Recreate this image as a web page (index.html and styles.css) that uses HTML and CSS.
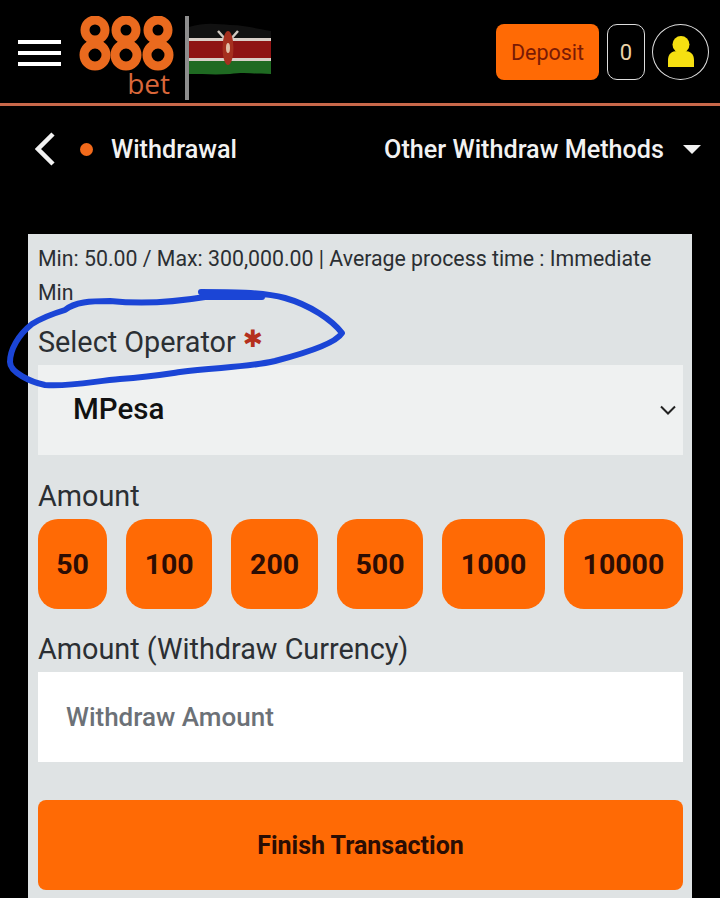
FILE: index.html
```html
<!DOCTYPE html>
<html lang="en">
<head>
  <meta charset="UTF-8" />
  <title>888bet Withdrawal</title>
  <link rel="stylesheet" href="styles.css">
</head>
<body>
  <header class="top-bar">
    <div class="menu-icon"><span></span><span></span><span></span></div>
    <div class="logo">
      <svg class="logo-rings" width="96" height="56" viewBox="0 0 96 56" fill="none" stroke="#ea6a1e" stroke-width="9">
        <circle cx="16" cy="14" r="10"/><circle cx="47" cy="14" r="10"/><circle cx="79" cy="14" r="10"/>
        <circle cx="16" cy="39" r="11"/><circle cx="47" cy="39" r="11"/><circle cx="79" cy="39" r="11"/>
      </svg>
      <span class="logo-bet">bet</span>
    </div>
    <svg class="flag" width="90" height="84" viewBox="0 0 90 84">
      <rect x="0" y="0" width="4" height="84" fill="#8d8d8d"/>
      <path d="M4 11 C20 6 32 8 45 9 C60 9 72 13 86 15 V23 H4Z" fill="#111"/>
      <rect x="4" y="22" width="82" height="3" fill="#d8cfc8"/>
      <rect x="4" y="25" width="82" height="17" fill="#8f1414"/>
      <rect x="4" y="42" width="82" height="3" fill="#d8cfc8"/>
      <path d="M4 45 H86 V58 C70 58 60 56 45 58 C30 59 18 58 4 58Z" fill="#1f6a22"/>
      <path d="M33 15 L41 24 M53 15 L45 24" stroke="#cfc8c0" stroke-width="2.5"/>
      <ellipse cx="43" cy="32" rx="5.5" ry="17" fill="#a5301f"/>
      <ellipse cx="43" cy="32" rx="2" ry="5" fill="#e0c0a8"/>
    </svg>
    <div class="top-actions">
      <button class="deposit-btn">Deposit</button>
      <div class="balance">0</div>
      <div class="avatar">
        <svg width="28" height="34" viewBox="0 0 28 34" fill="#f6e011">
          <circle cx="14" cy="9.5" r="8.5"/>
          <path d="M1 32 V25 C1 19 5 16 10 16 H18 C23 16 27 19 27 25 V32 Z"/>
        </svg>
      </div>
    </div>
  </header>

  <nav class="sub-bar">
    <svg class="back-icon" width="20" height="34" viewBox="0 0 20 34" fill="none" stroke="#f2f2f2" stroke-width="4.5">
      <path d="M18 2 L3 17 L18 32"/>
    </svg>
    <span class="dot"></span>
    <span class="sub-title">Withdrawal</span>
    <span class="other-methods">Other Withdraw Methods</span>
    <span class="caret"></span>
  </nav>

  <main class="card">
    <p class="limits">Min: 50.00 / Max: 300,000.00 | Average process time : Immediate Min</p>

    <label class="field-label operator-label">Select Operator <span class="required">✱</span></label>
    <div class="select-box">
      <span>MPesa</span>
      <svg width="16" height="10" viewBox="0 0 16 10" fill="none" stroke="#222" stroke-width="2"><path d="M1 1.5 L8 8.5 L15 1.5"/></svg>
    </div>

    <label class="field-label amount-label">Amount</label>
    <div class="amount-row">
      <button class="amount-btn">50</button>
      <button class="amount-btn">100</button>
      <button class="amount-btn">200</button>
      <button class="amount-btn">500</button>
      <button class="amount-btn">1000</button>
      <button class="amount-btn">10000</button>
    </div>

    <label class="field-label currency-label">Amount (Withdraw Currency)</label>
    <input class="amount-input" type="text" placeholder="Withdraw Amount">

    <button class="finish-btn">Finish Transaction</button>
  </main>

  <!-- hand drawn marker over the operator label -->
  <svg class="scribble" width="360" height="115" viewBox="0 0 360 115" fill="none" stroke="#1b45d6" stroke-width="6" stroke-linecap="round" stroke-linejoin="round">
    <path d="M201 12 C230 12 262 12 285 18 C310 25 332 40 342 53 C336 63 310 72 275 81 C245 88 215 87 180 92 C160 95 148 97 120 99 C95 101 70 107 45 105 C30 102 10 92 10 82 C10 70 18 55 32 44 C45 36 55 33 65 30 C75 22 90 21 110 21 C140 24 175 22 205 17 L262 17"/>
  </svg>
</body>
</html>
```

FILE: styles.css
```css
body {
  font-family: Roboto, "Liberation Sans", sans-serif;
  background-color: #000;
  margin: 0;
  position: relative;
  height: 898px;
  overflow: hidden;
}

.top-bar {
  display: flex;
  align-items: flex-start;
  height: 106px;
  box-sizing: border-box;
  padding: 16px 11px 0 18px;
  border-bottom: 3px solid #c8684a;
}

.menu-icon {
  display: flex;
  flex-direction: column;
  gap: 7px;
  width: 43px;
  margin-top: 24px;
}

.menu-icon span {
  height: 4px;
  background-color: #fff;
}

.logo {
  display: flex;
  flex-direction: column;
  align-items: flex-end;
  width: 96px;
  margin-left: 18px;
}

.logo-rings,
.flag {
  filter: blur(0.5px);
}

.logo-bet {
  color: #d9673a;
  font-family: "Open Sans", sans-serif;
  font-size: 28px;
  line-height: 22px;
  margin-right: 5px;
}

.flag {
  margin-left: 10px;
}

.top-actions {
  display: flex;
  gap: 7px;
  margin-left: auto;
  margin-top: 8px;
}

.deposit-btn {
  width: 103px;
  height: 56px;
  margin-right: 1px;
  background-color: #ff6a05;
  color: #7a1a05;
  font-family: inherit;
  font-size: 21.5px;
  border: none;
  border-radius: 8px;
}

.balance {
  width: 38px;
  height: 56px;
  box-sizing: border-box;
  border: 1px solid #ddd;
  border-radius: 10px;
  color: #ead2a8;
  font-size: 22px;
  display: flex;
  align-items: center;
  justify-content: center;
}

.avatar {
  width: 57px;
  height: 56px;
  box-sizing: border-box;
  border: 1px solid #ddd;
  border-radius: 50%;
  display: flex;
  align-items: center;
  justify-content: center;
}

.sub-bar {
  display: flex;
  align-items: center;
  height: 86px;
  padding: 0 19px 0 35px;
  color: #f2f2f2;
  font-size: 25.2px;
  font-weight: 500;
}

.dot {
  width: 13px;
  height: 13px;
  border-radius: 50%;
  background-color: #f26a1b;
  margin-left: 25px;
}

.sub-title {
  margin-left: 18px;
}

.other-methods {
  margin-left: auto;
}

.caret {
  margin-left: 19px;
  border-left: 9px solid transparent;
  border-right: 9px solid transparent;
  border-top: 9px solid #f2f2f2;
}

.card {
  width: 664px;
  height: 700px;
  box-sizing: border-box;
  margin: 42px 0 0 28px;
  padding: 8px 9px 0 10px;
  background-color: #dfe3e4;
  color: #2b2f33;
}

.limits {
  margin: 0;
  font-size: 21.3px;
  line-height: 34px;
}

.field-label {
  display: block;
  font-size: 28.8px;
  line-height: 34px;
}

.operator-label {
  margin-top: 15px;
}

.required {
  color: #b5301c;
  font-family: "DejaVu Sans", sans-serif;
  font-size: 24px;
  line-height: 0;
  vertical-align: 5px;
}

.select-box {
  display: flex;
  align-items: center;
  justify-content: space-between;
  height: 90px;
  margin-top: 6px;
  padding: 0 7px 0 35px;
  background-color: #eff1f1;
  color: #111;
  font-size: 29.5px;
  font-weight: 500;
}

.select-box span {
  margin-top: -2px;
}

.amount-label {
  margin-top: 24px;
}

.amount-row {
  display: flex;
  gap: 19px;
  margin-top: 6px;
}

.amount-btn {
  flex: 1 1 auto;
  height: 90px;
  padding: 0 18px;
  background-color: #ff6a05;
  color: #2d0d04;
  font-family: inherit;
  font-size: 28.5px;
  font-weight: 700;
  border: none;
  border-radius: 20px;
}

.amount-btn:first-child {
  flex: 0 0 69px;
  padding: 0;
}

.currency-label {
  margin-top: 23px;
}

.amount-input {
  display: block;
  width: 100%;
  height: 90px;
  box-sizing: border-box;
  margin-top: 6px;
  padding: 0 28px;
  background-color: #fff;
  border: none;
  font-family: inherit;
  font-size: 26px;
  font-weight: 500;
}

.amount-input::placeholder {
  color: #6c7177;
  opacity: 1;
}

.finish-btn {
  display: block;
  width: 100%;
  height: 90px;
  margin-top: 38px;
  background-color: #ff6a05;
  color: #2a0d04;
  font-family: inherit;
  font-size: 25px;
  font-weight: 700;
  border: none;
  border-radius: 8px;
}

.scribble {
  position: absolute;
  left: 0;
  top: 280px;
}
```
